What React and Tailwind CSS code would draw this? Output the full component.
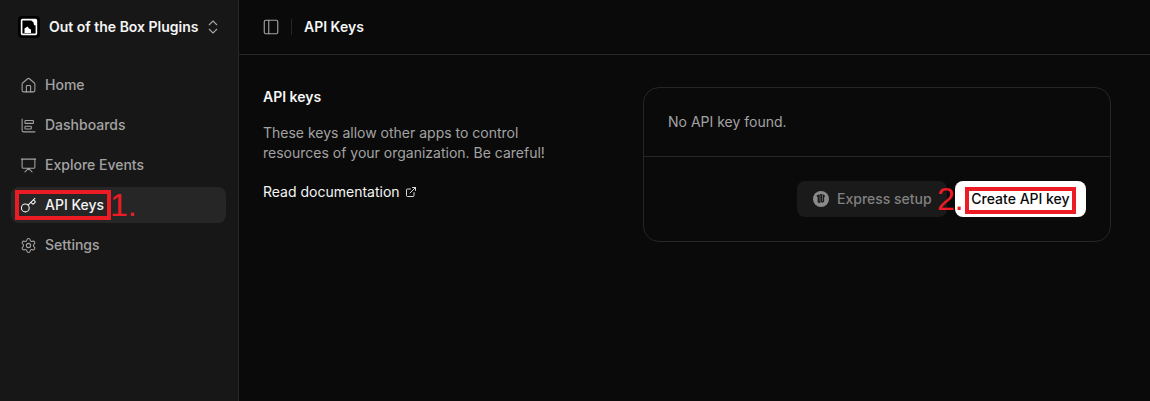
import { ChartBarBig, ChevronsUpDown, ExternalLink, House, Key, PanelLeft, Presentation, Settings } from "lucide-react";

const navItems = [
  { name: "Home", icon: House },
  { name: "Dashboards", icon: ChartBarBig },
  { name: "Explore Events", icon: Presentation },
  { name: "API Keys", icon: Key, active: true },
  { name: "Settings", icon: Settings },
];

function Logo() {
  return (
    <svg width="22" height="22" viewBox="0 0 22 22" className="shrink-0">
      <rect x="0" y="0" width="22" height="22" rx="4" fill="#000" />
      <rect x="3.6" y="3.6" width="14.8" height="14.8" rx="1" fill="none" stroke="#fff" strokeWidth="1.6" />
      <path d="M13 4h5v5.5l-2-.5-.5-2.5z" fill="#fff" />
      <path d="M6.5 17v-4.5l3-2 1.5 2 2 1v3.5z" fill="#fff" />
    </svg>
  );
}

function UnrealIcon() {
  return (
    <svg width="16" height="16" viewBox="0 0 16 16" className="shrink-0">
      <circle cx="8" cy="8" r="8" fill="#8a8a8a" />
      <path
        d="M3.8 5.4l1.5-1v6c0 .9.9 1.1 1.6.5V4.6c0-.6.9-1 1.7-.8v6.8c.7.7 1.4.3 1.9-.2V4.4l1.3 1"
        fill="none"
        stroke="#1a1a1a"
        strokeWidth="1.3"
      />
    </svg>
  );
}

export default function App() {
  return (
    <div className="relative flex h-[401px] w-[1150px] overflow-hidden bg-[#0a0a0a] font-['Inter',sans-serif] text-sm">
      <aside className="flex w-[239px] shrink-0 flex-col border-r border-[#262626] bg-[#171717]">
        <div className="flex h-[54px] items-center pl-[18px]">
          <Logo />
          <span className="ml-[9px] font-semibold text-[#f5f5f5]">Out of the Box Plugins</span>
          <ChevronsUpDown className="ml-[5px] h-[18px] w-[18px] text-[#a3a3a3]" strokeWidth={1.5} />
        </div>
        <nav className="mt-[13px] flex flex-col gap-1 px-[11px]">
          {navItems.map((item) => (
            <div
              key={item.name}
              className={
                item.active
                  ? "flex h-9 w-[215px] items-center gap-2 rounded-lg bg-[#262626] pl-[9px] font-medium text-[#f5f5f5]"
                  : "flex h-9 w-[215px] items-center gap-2 rounded-lg pl-[9px] font-medium text-[#a3a3a3]"
              }
            >
              <item.icon className="h-[17px] w-[17px] shrink-0" strokeWidth={1.5} />
              <span>{item.name}</span>
            </div>
          ))}
        </nav>
      </aside>

      <main className="flex min-w-0 flex-1 flex-col">
        <header className="flex h-[55px] shrink-0 items-center border-b border-[#262626] pl-[23px]">
          <PanelLeft className="h-[18px] w-[18px] text-[#a3a3a3]" strokeWidth={1.5} />
          <div className="ml-[11px] mr-[12px] h-4 w-px bg-[#262626]" />
          <h1 className="font-semibold text-[#f5f5f5]">API Keys</h1>
        </header>

        <div className="flex pl-6 pt-[32px]">
          <section className="w-[380px] shrink-0">
            <h2 className="font-semibold leading-5 text-[#f5f5f5]">API keys</h2>
            <p className="mt-[16px] w-[300px] leading-5 text-[#a3a3a3]">
              These keys allow other apps to control resources of your organization. Be careful!
            </p>
            <a className="mt-[19px] flex items-center gap-[5px] font-normal leading-5 text-[#f5f5f5]">
              Read documentation
              <ExternalLink className="h-3 w-3" strokeWidth={1.75} />
            </a>
          </section>

          <section className="flex h-[155px] w-[468px] shrink-0 flex-col rounded-2xl border border-[#262626]">
            <div className="flex h-[69px] items-center border-b border-[#262626] pl-6 text-[#a3a3a3]">
              No API key found.
            </div>
            <div className="flex flex-1 items-start justify-end gap-2 pr-6 pt-6">
              <button className="flex h-9 w-[150px] items-center gap-2 rounded-lg bg-[#1a1a1a] pl-4 font-medium text-[#808080]">
                <UnrealIcon />
                Express setup
              </button>
              <button className="h-9 w-[131px] rounded-lg bg-white font-medium text-[#0a0a0a]">Create API key</button>
            </div>
          </section>
        </div>
      </main>

      {/* red annotations drawn on top of the screenshot */}
      <div className="absolute left-[15px] top-[190px] h-[30px] w-[96px] border-4 border-[#ed1c24]" />
      <span className="absolute left-[110px] top-[187px] font-['Liberation_Sans',sans-serif] text-[32px] font-light leading-9 text-[#ed1c24]">
        1.
      </span>
      <div className="absolute left-[965px] top-[187px] h-[27px] w-[111px] border-4 border-[#ed1c24]" />
      <span className="absolute left-[937px] top-[181px] font-['Liberation_Sans',sans-serif] text-[32px] font-light leading-9 text-[#ed1c24]">
        2.
      </span>
    </div>
  );
}
